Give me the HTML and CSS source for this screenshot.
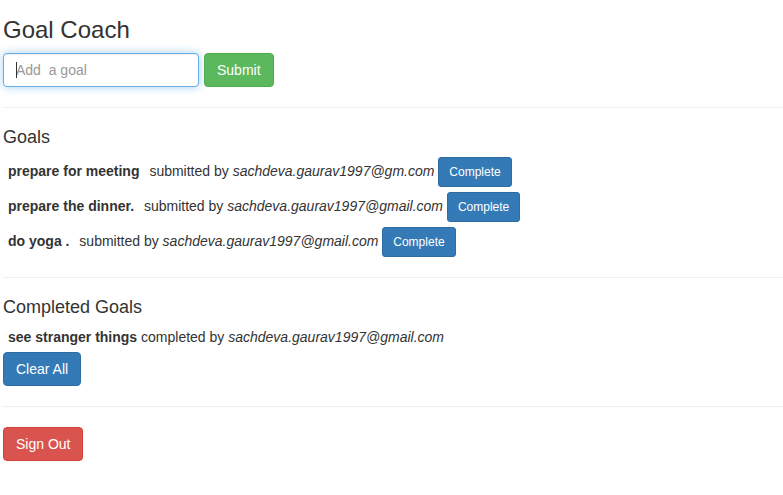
FILE: index.html
```html
<!DOCTYPE html>
<html>
<head>
<meta charset="utf-8">
<title>Goal Coach</title>
<link rel="stylesheet" href="styles.css">
</head>
<body>
<div class="page">
  <h3 class="title">Goal Coach</h3>
  <form class="add-form">
    <span class="input-wrap">
      <input class="form-control" type="text" placeholder="Add  a goal">
      <span class="caret"></span>
    </span>
    <button type="button" class="btn btn-success">Submit</button>
  </form>
  <hr>
  <h4>Goals</h4>
  <div class="goal">
    <strong>prepare for meeting</strong> <span class="by">submitted by <em>sachdeva.gaurav1997@gm.com</em></span>
    <button type="button" class="btn btn-sm btn-primary">Complete</button>
  </div>
  <div class="goal">
    <strong>prepare the dinner.</strong> <span class="by">submitted by <em>sachdeva.gaurav1997@gmail.com</em></span>
    <button type="button" class="btn btn-sm btn-primary">Complete</button>
  </div>
  <div class="goal">
    <strong>do yoga .</strong> <span class="by">submitted by <em>sachdeva.gaurav1997@gmail.com</em></span>
    <button type="button" class="btn btn-sm btn-primary">Complete</button>
  </div>
  <hr>
  <h4>Completed Goals</h4>
  <div class="goal">
    <strong>see stranger things</strong> completed by <em>sachdeva.gaurav1997@gmail.com</em>
  </div>
  <button type="button" class="btn btn-primary">Clear All</button>
  <hr>
  <button type="button" class="btn btn-danger">Sign Out</button>
</div>
</body>
</html>
```

FILE: styles.css
```css
* { box-sizing: border-box; }
html, body { margin: 0; padding: 0; background: #fff; }
body {
  font-family: "Liberation Sans", Arial, Helvetica, sans-serif;
  font-size: 14px;
  line-height: 20px;
  color: #333;
}
.page { padding: 0 0 0 3px; }
h3, h4 { font-weight: 500; line-height: 1.1; color: #333; }
h3.title { font-size: 24px; margin: 17px 0 10px; }
h4 { font-size: 18px; margin: 10px 0 9px; }
hr {
  margin: 20px 0;
  border: 0;
  border-top: 1px solid #eee;
  height: 0;
}
.add-form { display: flex; align-items: center; gap: 5px; margin: 0; }
.input-wrap { position: relative; display: block; }
.form-control {
  display: block;
  width: 196px;
  height: 34px;
  padding: 6px 12px;
  font-family: inherit;
  font-size: 14px;
  line-height: 20px;
  color: #555;
  background: #fff;
  border: 1px solid #66afe9;
  border-radius: 4px;
  outline: 0;
  box-shadow: inset 0 1px 1px rgba(0,0,0,.075), 0 0 8px rgba(102,175,233,.6);
}
.form-control::placeholder { color: #999; opacity: 1; }
.caret {
  position: absolute;
  left: 13px;
  top: 9px;
  width: 1px;
  height: 16px;
  background: #333;
}
.btn {
  display: inline-block;
  padding: 6px 12px;
  margin: 0;
  font-family: inherit;
  font-size: 14px;
  font-weight: 400;
  line-height: 20px;
  text-align: center;
  white-space: nowrap;
  vertical-align: middle;
  border: 1px solid transparent;
  border-radius: 4px;
  color: #fff;
  cursor: pointer;
}
.btn-sm { padding: 5px 10px; font-size: 12px; line-height: 18px; border-radius: 3px; }
.btn-success { background: #5cb85c; border-color: #4cae4c; }
.btn-primary { background: #337ab7; border-color: #2e6da4; }
.btn-danger { background: #d9534f; border-color: #d43f3a; }
.goal { margin: 5px; }
.goal strong { font-weight: 700; }
.by { margin-left: 6px; }
```
